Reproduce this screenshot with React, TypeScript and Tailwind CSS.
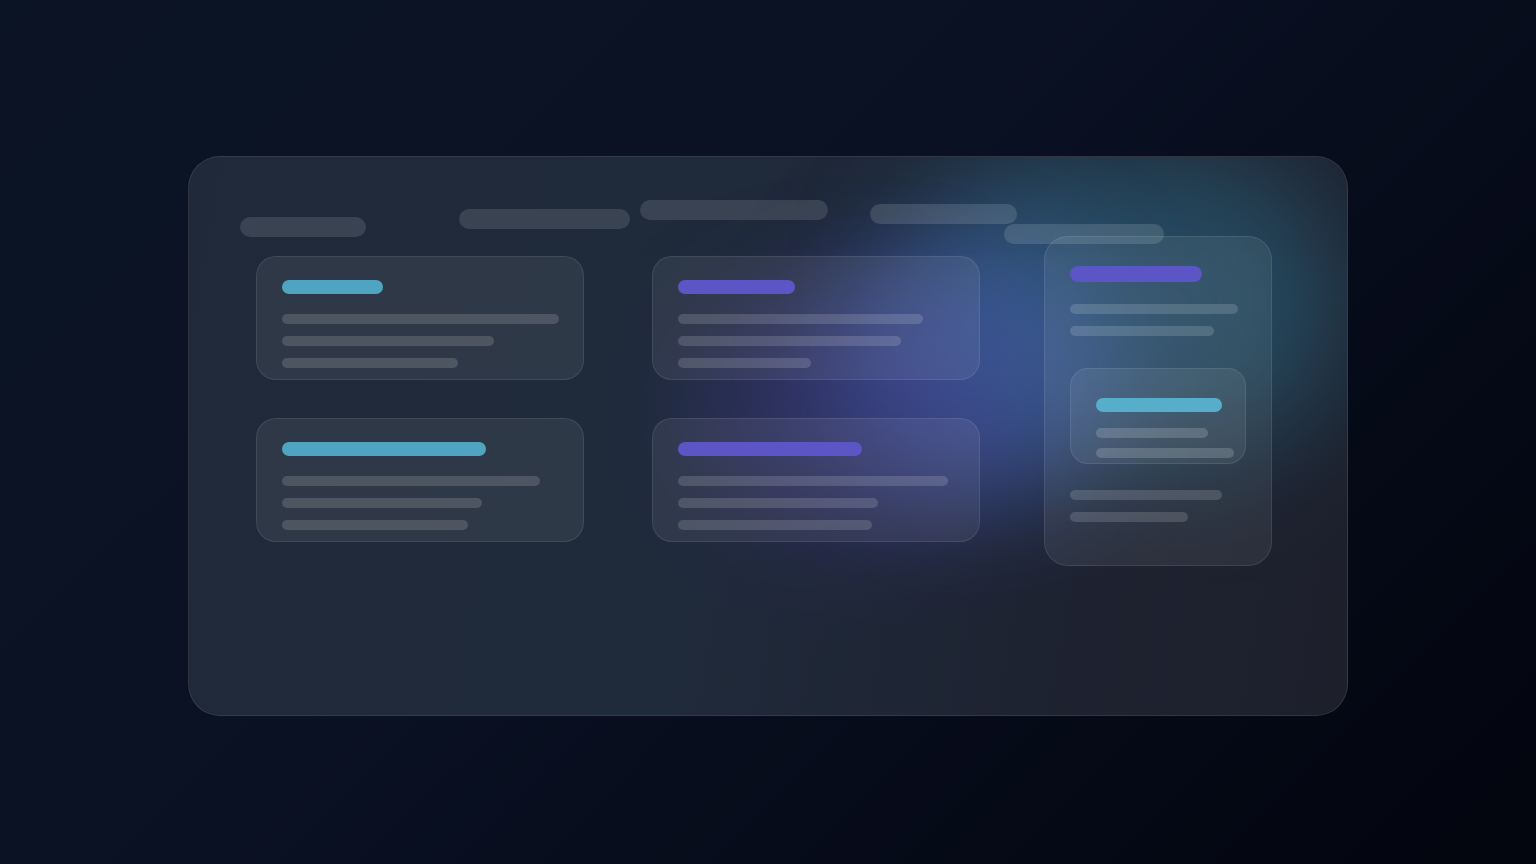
import React from "react";

function Line({ w, cls = "bg-white/[0.15]" }: { w: number; cls?: string }) {
  return <div className={`h-[10px] rounded-full ${cls}`} style={{ width: w }} />;
}

function Card({ accent, accentW, lines }: { accent: string; accentW: number; lines: number[] }) {
  return (
    <div className="h-[124px] w-[328px] rounded-[20px] border border-white/[0.09] bg-white/[0.07] pl-[25px] pt-[23px]">
      <div className={`h-[14px] rounded-full ${accent}`} style={{ width: accentW }} />
      <div className="mt-[20px] flex flex-col gap-[12px]">
        {lines.map((w, i) => (
          <Line key={i} w={w} />
        ))}
      </div>
    </div>
  );
}

export default function App() {
  const cyan = "bg-[#4fa5c1]";
  const purple = "bg-[#5b55c6]";
  return (
    <div className="h-screen w-full overflow-hidden bg-[linear-gradient(135deg,#0b1425_0%,#0a1123_45%,#060b19_70%,#03050e_100%)] pt-[156px]" style={{ fontFamily: "Inter, sans-serif" }}>
      <div className="relative mx-auto h-[560px] w-[1160px] overflow-hidden rounded-[32px] border border-white/[0.09] bg-[linear-gradient(100deg,#1f2939_0%,#1f2a3a_45%,#1e2331_75%,#1d1f2b_100%)]">
        {/* glows */}
        <div className="absolute left-[720px] top-[-10px] h-[310px] w-[440px] rounded-full bg-[#2e7290] opacity-[0.5] blur-[60px]" />
        <div className="absolute left-[630px] top-[80px] h-[260px] w-[300px] rounded-full bg-[#4b67bb] opacity-[0.52] blur-[55px]" />
        <div className="absolute left-[500px] top-[130px] h-[250px] w-[330px] rounded-full bg-[#443c9a] opacity-[0.36] blur-[55px]" />

        <div className="relative pl-[51px] pt-[43px]">
          {/* header pills */}
          <div className="flex h-[36px] items-start">
            <div className="mt-[17px] h-[20px] w-[126px] rounded-full bg-white/[0.12]" />
            <div className="ml-[93px] mt-[9px] h-[20px] w-[171px] rounded-full bg-white/[0.12]" />
            <div className="ml-[10px] mt-0 h-[20px] w-[188px] rounded-full bg-white/[0.12]" />
            <div className="ml-[42px] mt-[4px] h-[20px] w-[147px] rounded-full bg-white/[0.13]" />
            <div className="relative z-20 ml-[-13px] mt-[24px] h-[20px] w-[160px] rounded-full bg-white/[0.13]" />
          </div>

          {/* content */}
          <div className="ml-[16px] flex items-start">
            <div className="flex flex-col gap-[38px] pt-[20px]">
              <Card accent={cyan} accentW={101} lines={[277, 212, 176]} />
              <Card accent={cyan} accentW={204} lines={[258, 200, 186]} />
            </div>
            <div className="ml-[68px] flex flex-col gap-[38px] pt-[20px]">
              <Card accent={purple} accentW={117} lines={[245, 223, 133]} />
              <Card accent={purple} accentW={184} lines={[270, 200, 194]} />
            </div>
            <div className="ml-[64px] h-[330px] w-[228px] rounded-[24px] border border-white/[0.09] bg-white/[0.07] pl-[25px] pt-[29px]">
              <div className={`h-[16px] w-[132px] rounded-full ${purple}`} />
              <div className="mt-[22px] flex flex-col gap-[12px]">
                <Line w={168} />
                <Line w={144} />
              </div>
              <div className="mt-[32px] h-[96px] w-[176px] rounded-[18px] border border-white/[0.09] bg-white/[0.07] pl-[25px] pt-[29px]">
                <div className={`h-[14px] w-[126px] rounded-full bg-[#56aecb]`} />
                <div className="mt-[16px] flex flex-col gap-[10px]">
                  <Line w={112} cls="bg-white/[0.17]" />
                  <Line w={138} cls="bg-white/[0.17]" />
                </div>
              </div>
              <div className="mt-[26px] flex flex-col gap-[12px]">
                <Line w={152} />
                <Line w={118} />
              </div>
            </div>
          </div>
        </div>
      </div>
    </div>
  );
}
